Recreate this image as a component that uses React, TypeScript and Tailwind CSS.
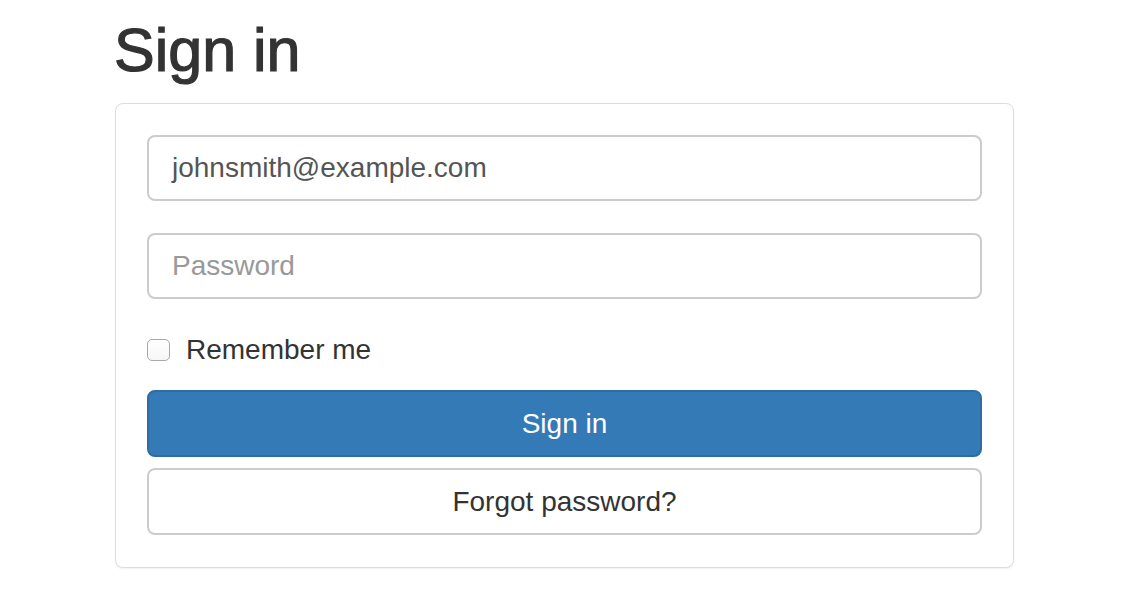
import React from "react";

export default function App() {
  return (
    <div
      className="min-h-[610px] w-[1122px] bg-white pl-[115px] pt-[17px]"
      style={{ fontFamily: '"Liberation Sans", Arial, sans-serif' }}
    >
      <div className="w-[899px]">
        <h1 className="-ml-[1px] text-[61px] leading-[66px] font-normal text-[#333] [-webkit-text-stroke:1.2px_#333]">Sign in</h1>
        <div className="mt-[20px] rounded-[8px] border border-[#ddd] bg-white px-[31px] pt-[31px] pb-[32px] shadow-[0_1px_2px_rgba(0,0,0,0.06)]">
          <div className="flex h-[66px] items-center rounded-[8px] border-2 border-[#ccc] px-[23px] text-[28px] text-[#555]">
            johnsmith@example.com
          </div>
          <div className="mt-[32px] flex h-[66px] items-center rounded-[8px] border-2 border-[#ccc] px-[23px] text-[28px] text-[#999]">
            Password
          </div>
          <div className="mt-[38px] flex h-[26px] items-center">
            <div className="h-[22px] w-[23px] rounded-[5px] border border-[#a9a9a9] bg-gradient-to-b from-white to-[#f6f6f6]" />
            <span className="ml-[16px] text-[28px] leading-[26px] text-[#333]">Remember me</span>
          </div>
          <div className="mt-[27px] flex h-[67px] items-center justify-center rounded-[8px] border-2 border-[#2e6da4] bg-[#337ab7] text-[28px] text-white">
            Sign in
          </div>
          <div className="mt-[11px] flex h-[67px] items-center justify-center rounded-[8px] border-2 border-[#ccc] bg-white text-[28px] text-[#333]">
            Forgot password?
          </div>
        </div>
      </div>
    </div>
  );
}
